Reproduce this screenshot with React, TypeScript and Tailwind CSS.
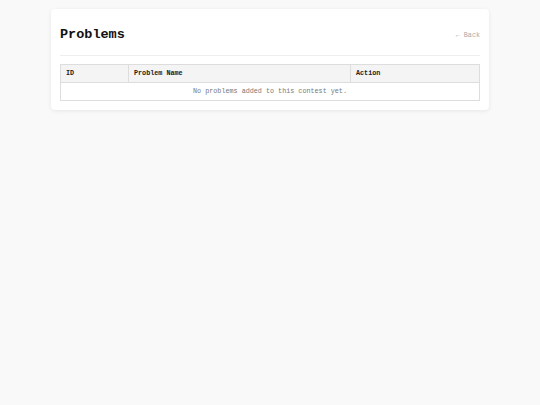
export default function App() {
    return (
        <div className="min-h-[405px] w-full bg-[#f9f9f9] pt-[9px]" style={{ fontFamily: '"Liberation Mono", "Courier New", monospace' }}>
            <div className="mx-auto w-[438px] rounded-[4px] bg-white px-[9px] pt-[9px] pb-[9px] shadow-[0_1px_4px_rgba(0,0,0,0.08)]">
                <div className="flex h-[38px] items-start justify-between border-b border-[#eeeeee] pt-[2px] pb-[7px]">
                    <h1 className="flex h-[30px] items-center text-[13.5px] font-bold text-[#111]">Problems</h1>
                    <a href="#" className="flex h-[30px] items-center text-[6.75px] text-[#aaaaaa]">← Back</a>
                </div>
                <table className="mt-[8px] w-full border-collapse border border-[#dddddd] text-[6.75px]">
                    <thead>
                        <tr className="h-[18px] bg-[#f4f4f4] text-left text-[#222]">
                            <th className="w-[68px] border-r border-b border-[#dddddd] px-[5px] font-bold">ID</th>
                            <th className="w-[222px] border-r border-b border-[#dddddd] px-[5px] font-bold">Problem Name</th>
                            <th className="border-b border-[#dddddd] px-[5px] font-bold">Action</th>
                        </tr>
                    </thead>
                    <tbody>
                        <tr className="h-[18px]">
                            <td colSpan={3} className="text-center text-[#777]">No problems added to this contest yet.</td>
                        </tr>
                    </tbody>
                </table>
            </div>
        </div>
    );
}
